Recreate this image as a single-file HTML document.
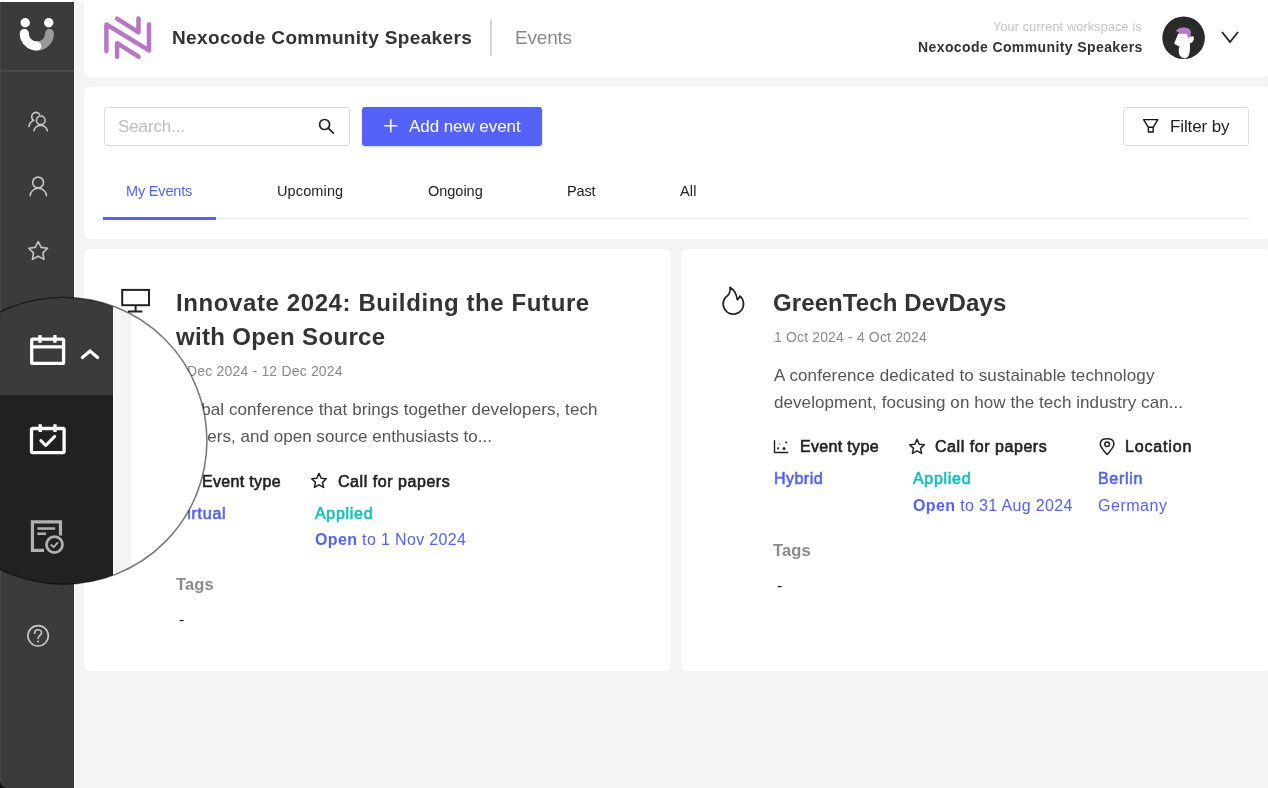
<!DOCTYPE html>
<html><head><meta charset="utf-8">
<style>
*{box-sizing:border-box;margin:0;padding:0}
html,body{width:1268px;height:788px;overflow:hidden;background:#f4f4f4;font-family:"Liberation Sans",sans-serif}
body{position:relative}
.a{position:absolute;white-space:nowrap;will-change:transform}
.card{position:absolute;background:#fff;border-radius:6px}
svg{position:absolute;overflow:visible}
b{font-weight:700}
</style></head><body>
<div class="a" style="left:0;top:0;width:74px;height:788px;background:#3b3b3b"></div>
<div class="a" style="left:0;top:0;width:1268px;height:2px;background:#fff;z-index:1"></div>
<div class="a" style="left:0;top:2px;width:1px;height:786px;background:#474747"></div>
<svg width="12" height="12" style="left:0;top:776px"><path d="M0,4.5 A7.5,7.5 0 0 0 7.5,12 L0,12 Z" fill="#111"/></svg>
<div class="a" style="left:73px;top:0;width:1px;height:788px;background:#363636"></div>
<div class="a" style="left:74px;top:0;width:1px;height:788px;background:#fff"></div>
<div class="a" style="left:0;top:70px;width:74px;height:2px;background:#4a4a4a"></div>

<div class="card" style="left:84px;top:-6px;width:1186px;height:83px"></div>
<div class="card" style="left:84px;top:87px;width:1186px;height:152px"></div>
<div class="card" style="left:84px;top:249px;width:587px;height:422px"></div>
<div class="card" style="left:681px;top:249px;width:589px;height:422px"></div>

<!-- search + buttons -->
<div class="a" style="left:104px;top:107px;width:246px;height:39px;border:1.5px solid #dcdcdc;border-radius:3px;background:#fff"></div>
<div class="a" style="left:362px;top:107px;width:179.5px;height:39px;border-radius:3px;background:#5462fa;box-shadow:0 1px 2px rgba(0,0,0,.18)"></div>
<div class="a" style="left:1123px;top:107px;width:126px;height:39px;border:1.5px solid #dcdcdc;border-radius:3px;background:#fff"></div>

<svg width="1268" height="788" style="left:0;top:0">
 <!-- sidebar logo -->
 <circle cx="25.2" cy="22.7" r="4.7" fill="#fff"/>
 <circle cx="48.7" cy="22.7" r="4.7" fill="#fff"/>
 <path d="M24.3,33.5 A12.6,12.6 0 0 0 49.5,33.5" fill="none" stroke="#9a9a9a" stroke-width="9" stroke-linecap="round"/>
 <path d="M24.3,33.5 A12.6,12.6 0 0 0 36.9,46.1" fill="none" stroke="#fff" stroke-width="9" stroke-linecap="round"/>
 <g fill="none" stroke="#c6c6c6" stroke-width="1.6" stroke-linecap="round" stroke-linejoin="round">
  <!-- users -->
  <circle cx="40.8" cy="120.3" r="4.3"/>
  <path d="M34,130.7 A6.8,6.6 0 0 1 47.3,130.7"/>
  <path d="M39.6,114.4 A4.3,4.3 0 1 0 33.8,120.4 A7,7 0 0 0 29,126.5"/>
  <!-- person -->
  <circle cx="38.1" cy="182.5" r="5.4"/>
  <path d="M30.2,195.7 A8.1,7.4 0 0 1 46.4,195.7"/>
  <!-- star -->
  <path id="star" d="M38.2,241.5 L41.1,247.4 L47.6,248.3 L42.9,252.9 L44,259.4 L38.2,256.3 L32.4,259.4 L33.5,252.9 L28.8,248.3 L35.3,247.4 Z"/>
  <!-- help -->
  <circle cx="38.1" cy="635.8" r="10.2"/>
  <path d="M34.6,633.4 C34.6,631.3 36.1,629.8 38.1,629.8 C40.1,629.8 41.5,631.2 41.5,633 C41.5,635.2 38.1,635.8 38.1,638.4"/>
 </g>
 <circle cx="38.1" cy="641.4" r="1" fill="#c8c8c8"/>

 <!-- header logo -->
 <g fill="none" stroke="#b678c1" stroke-width="4.5" stroke-linecap="round" stroke-linejoin="round">
  <path d="M106.4,51 L106.4,24.5 L149,50.4 L149,24.5"/>
  <path d="M117.1,18.6 L138.5,32.3 L138.5,18.6"/>
  <path d="M117.1,56.7 L117.1,43.2 L138.5,56.7"/>
 </g>
 <path d="M491,19.8 V55.7" stroke="#c8c8c8" stroke-width="1.5"/>
 <!-- avatar -->
 <circle cx="1183.6" cy="37.8" r="21.3" fill="#2a2a2a"/>
 <path d="M1179,47.5 C1178.3,52 1178.6,57.3 1184.4,58.4 C1189.9,57.6 1190.2,52 1189.9,43 Z" fill="#fff"/>
 <path d="M1178.3,33.6 L1174.2,43.3 C1175.5,45.2 1178.5,46.3 1181,47.2 L1186,47.5 L1189.8,43.2 C1192.2,43 1194.1,40.2 1193.9,37.9 C1193.7,36 1192.1,35.9 1190.5,36.8 L1189.5,33 Z" fill="#fff"/>
 <path d="M1176.1,30.9 C1177,28.5 1181,27.4 1184.4,27.5 C1188.6,27.7 1191.3,30 1190.9,33 C1190.7,36 1189.6,38 1188.5,38.7 C1187.6,36.5 1187.1,34.6 1186.6,33.7 C1183,33.7 1179,33.2 1176.1,30.9 Z" fill="#b87ac6"/>
 <path d="M1180.5,37.5 q1.5,-1 3,0 M1180.8,40 q1,0.6 2,0" stroke="#bbb" stroke-width="0.6" fill="none"/>
 <path d="M1222,32 L1230,42 L1238,32" fill="none" stroke="#222" stroke-width="1.8" stroke-linejoin="miter"/>

 <!-- search icon -->
 <circle cx="324.6" cy="124.5" r="5" fill="none" stroke="#222" stroke-width="1.7"/>
 <path d="M328.3,128.2 L333.4,133.2" stroke="#222" stroke-width="1.7" stroke-linecap="round"/>
 <path d="M384.2,125.7 H397.3 M390.75,119.2 V132.3" stroke="#fff" stroke-width="1.6"/>
 <path d="M1143.6,119.6 H1157.8 L1153.2,127.3 H1148.4 Z M1148.4,127.3 V132 H1153.2 V127.3" fill="none" stroke="#151515" stroke-width="1.4" stroke-linejoin="round"/>

 <!-- tabs line -->
 <rect x="103" y="218" width="1147" height="1.3" fill="#ececec"/>
 <rect x="103" y="217" width="113" height="3" fill="#5462fa"/>

 <!-- card1 icons -->
 <g fill="none" stroke="#222" stroke-width="2">
  <rect x="122.2" y="289.9" width="26.8" height="15.3"/>
  <path d="M135.6,306 V311.5 M128,311.5 H142.5"/>
 </g>
 <g fill="none" stroke="#222" stroke-width="1.5" stroke-linejoin="round" stroke-linecap="round">
  <path d="M177,473.5 V486 H190.5"/>
  <use href="#cstar" transform="translate(-598,34)"/>
 </g>
 <!-- card2 icons -->
 <g fill="none" stroke="#222" stroke-width="1.7" stroke-linejoin="round" stroke-linecap="round">
  <path d="M730,287.3 C731,292.3 728.5,295.3 725.4,297.5 A10.2,10.2 0 1 0 739.9,296.1 C739,298 738.3,299.6 737.3,299.6 C736.3,293.5 734.5,290 730,287.3 Z"/>
 </g>
 <g fill="none" stroke="#222" stroke-width="1.5" stroke-linejoin="round" stroke-linecap="round">
  <path d="M774.5,440.6 V452.5 H787.8" stroke-width="1.4"/>
  <path id="cstar" d="M917,439.4 L919.2,444.3 L924.3,444.8 L920.5,448.4 L921.6,453.4 L917,450.8 L912.4,453.4 L913.5,448.4 L909.7,444.8 L914.8,444.3 Z"/>
  <path d="M1107.1,454.5 C1103,450 1100.3,447 1100.3,443.9 C1100.3,440.2 1103.3,438.7 1107.1,438.7 C1110.9,438.7 1113.9,440.2 1113.9,443.9 C1113.9,447 1111.2,450 1107.1,454.5 Z"/>
  <circle cx="1107.1" cy="444.2" r="2.3"/>
 </g>
 <g fill="#222"><circle cx="778.1" cy="448.4" r="1.05"/><circle cx="779.9" cy="444.1" r="0.8" fill="#777"/><circle cx="784" cy="448.6" r="1.5"/><circle cx="786.2" cy="442.4" r="1"/></g>
</svg>

<div class="a" style="left:171.5px;top:28.2px;font-size:19px;line-height:19px;font-weight:700;color:#333;letter-spacing:0.36px">Nexocode Community Speakers</div>
<div class="a" style="left:515.3px;top:28.3px;font-size:19px;line-height:19px;font-weight:400;color:#8a8a8a;letter-spacing:-0.20px">Events</div>
<div class="a" style="right:125.9px;top:20.5px;font-size:12.5px;line-height:12.5px;font-weight:400;color:#c4c4c4;letter-spacing:0.22px">Your current workspace is</div>
<div class="a" style="right:125.7px;top:39.6px;font-size:14px;line-height:14px;font-weight:700;color:#333;letter-spacing:0.40px">Nexocode Community Speakers</div>
<div class="a" style="left:117.9px;top:117.6px;font-size:17px;line-height:17px;font-weight:400;color:#bdbdbd;letter-spacing:-0.12px">Search...</div>
<div class="a" style="left:409.4px;top:117.6px;font-size:17px;line-height:17px;font-weight:400;color:#fff;letter-spacing:-0.07px">Add new event</div>
<div class="a" style="left:1169.7px;top:117.5px;font-size:17px;line-height:17px;font-weight:400;color:#222;letter-spacing:-0.11px">Filter by</div>
<div class="a" style="left:125.7px;top:184.2px;font-size:14.5px;line-height:14.5px;font-weight:400;color:#5462f8;letter-spacing:-0.17px">My Events</div>
<div class="a" style="left:277.2px;top:184.2px;font-size:14.5px;line-height:14.5px;font-weight:400;color:#222;letter-spacing:0.13px">Upcoming</div>
<div class="a" style="left:427.8px;top:184.2px;font-size:14.5px;line-height:14.5px;font-weight:400;color:#222;letter-spacing:-0.02px">Ongoing</div>
<div class="a" style="left:567.0px;top:184.2px;font-size:14.5px;line-height:14.5px;font-weight:400;color:#222;letter-spacing:-0.14px">Past</div>
<div class="a" style="left:680.1px;top:184.2px;font-size:14.5px;line-height:14.5px;font-weight:400;color:#222;letter-spacing:0.14px">All</div>
<div class="a" style="left:175.5px;top:290.9px;font-size:24px;line-height:24px;font-weight:700;color:#333;letter-spacing:0.60px">Innovate 2024: Building the Future</div>
<div class="a" style="left:175.5px;top:324.7px;font-size:24px;line-height:24px;font-weight:700;color:#333;letter-spacing:0.34px">with Open Source</div>
<div class="a" style="left:175.0px;top:363.7px;font-size:14px;line-height:14px;font-weight:400;color:#8a8a8a;letter-spacing:0.18px">9 Dec 2024 - 12 Dec 2024</div>
<div class="a" style="left:162.7px;top:401.1px;font-size:17px;line-height:17px;font-weight:400;color:#555;letter-spacing:0.08px">A global conference that brings together developers, tech</div>
<div class="a" style="left:175.0px;top:428.1px;font-size:17px;line-height:17px;font-weight:400;color:#555;letter-spacing:0.03px">leaders, and open source enthusiasts to...</div>
<div class="a" style="left:202.0px;top:473.5px;font-size:16px;line-height:16px;font-weight:400;color:#222;letter-spacing:0.33px;-webkit-text-stroke:0.6px #222">Event type</div>
<div class="a" style="left:337.5px;top:473.5px;font-size:16px;line-height:16px;font-weight:400;color:#222;letter-spacing:0.55px;-webkit-text-stroke:0.6px #222">Call for papers</div>
<div class="a" style="left:176.0px;top:505.5px;font-size:16px;line-height:16px;font-weight:400;color:#5462f8;letter-spacing:0.76px;-webkit-text-stroke:0.6px #5462f8">Virtual</div>
<div class="a" style="left:314.8px;top:505.5px;font-size:16px;line-height:16px;font-weight:400;color:#16bdbb;letter-spacing:0.70px;-webkit-text-stroke:0.6px #16bdbb">Applied</div>
<div class="a" style="left:314.8px;top:531.9px;font-size:16px;line-height:16px;font-weight:400;color:#5462f8;letter-spacing:0.35px"><b>Open</b> to 1 Nov 2024</div>
<div class="a" style="left:175.5px;top:576.0px;font-size:16.5px;line-height:16.5px;font-weight:700;color:#8a8a8a;letter-spacing:0.17px">Tags</div>
<div class="a" style="left:179.0px;top:611.5px;font-size:16px;line-height:16px;font-weight:400;color:#222;letter-spacing:0.00px">-</div>
<div class="a" style="left:773.1px;top:290.5px;font-size:24px;line-height:24px;font-weight:700;color:#333;letter-spacing:0.10px">GreenTech DevDays</div>
<div class="a" style="left:773.9px;top:329.6px;font-size:14px;line-height:14px;font-weight:400;color:#8a8a8a;letter-spacing:0.15px">1 Oct 2024 - 4 Oct 2024</div>
<div class="a" style="left:774.0px;top:367.3px;font-size:17px;line-height:17px;font-weight:400;color:#555;letter-spacing:0.13px">A conference dedicated to sustainable technology</div>
<div class="a" style="left:774.0px;top:393.7px;font-size:17px;line-height:17px;font-weight:400;color:#555;letter-spacing:0.07px">development, focusing on how the tech industry can...</div>
<div class="a" style="left:799.7px;top:439.3px;font-size:16px;line-height:16px;font-weight:400;color:#222;letter-spacing:0.33px;-webkit-text-stroke:0.6px #222">Event type</div>
<div class="a" style="left:935.1px;top:439.3px;font-size:16px;line-height:16px;font-weight:400;color:#222;letter-spacing:0.55px;-webkit-text-stroke:0.6px #222">Call for papers</div>
<div class="a" style="left:1125.1px;top:439.3px;font-size:16px;line-height:16px;font-weight:400;color:#222;letter-spacing:0.83px;-webkit-text-stroke:0.6px #222">Location</div>
<div class="a" style="left:773.5px;top:471.1px;font-size:16px;line-height:16px;font-weight:400;color:#5462f8;letter-spacing:0.47px;-webkit-text-stroke:0.6px #5462f8">Hybrid</div>
<div class="a" style="left:912.6px;top:471.1px;font-size:16px;line-height:16px;font-weight:400;color:#16bdbb;letter-spacing:0.70px;-webkit-text-stroke:0.6px #16bdbb">Applied</div>
<div class="a" style="left:912.6px;top:497.6px;font-size:16px;line-height:16px;font-weight:400;color:#5462f8;letter-spacing:0.36px"><b>Open</b> to 31 Aug 2024</div>
<div class="a" style="left:1097.9px;top:470.7px;font-size:16px;line-height:16px;font-weight:400;color:#5462f8;letter-spacing:0.70px;-webkit-text-stroke:0.6px #5462f8">Berlin</div>
<div class="a" style="left:1097.9px;top:497.7px;font-size:16px;line-height:16px;font-weight:400;color:#5462f8;letter-spacing:0.52px">Germany</div>
<div class="a" style="left:772.8px;top:542.0px;font-size:16.5px;line-height:16.5px;font-weight:700;color:#8a8a8a;letter-spacing:0.17px">Tags</div>
<div class="a" style="left:776.8px;top:577.5px;font-size:16px;line-height:16px;font-weight:400;color:#222;letter-spacing:0.00px">-</div>

<!-- lens -->
<div style="position:absolute;left:-81px;top:297px;width:288px;height:288px;clip-path:circle(143.47px at 144.44px 143.73px)">
 <div style="position:absolute;left:0;top:0;width:288px;height:98px;background:linear-gradient(to right,#3b3b3b 0,#3b3b3b 193px,#363636 193px,#363636 194px,#fff 194px,#fff 195px,#f4f4f4 195px,#f4f4f4 212px,#fff 212px)"></div>
 <div style="position:absolute;left:0;top:98px;width:288px;height:190px;background:linear-gradient(to right,#212121 0,#212121 193px,#1a1a1a 193px,#1a1a1a 194px,#fff 194px,#fff 195px,#f4f4f4 195px,#f4f4f4 212px,#fff 212px)"></div>
 <svg width="1268" height="788" style="left:81px;top:-297px">
  <g fill="none" stroke="#fff" stroke-width="3.3" stroke-linecap="butt" stroke-linejoin="round">
   <g transform="translate(-0.7,-0.9)">
    <rect x="32.4" y="340" width="31.9" height="24.3" rx="1"/>
    <path d="M32.4,347.8 H64.3 M40.7,336 V343.6 M55.6,336 V343.6"/>
   </g>
   <path d="M82.4,357.5 L90,351.1 L97.6,357.5" stroke-linecap="round" stroke-linejoin="miter"/>
   <g transform="translate(-0.6,-0.8)">
    <rect x="32.1" y="429.3" width="32.6" height="24.1" rx="1"/>
    <path d="M40.8,425.1 V432.8 M55.6,425.1 V432.8"/>
    <path d="M41.5,441.4 L46.3,446.3 L55.3,437.2" stroke-width="3" stroke-linecap="round"/>
   </g>
  </g>
  <g fill="none" stroke="#b0b0b0" stroke-width="3.2" transform="translate(-1,-1.2)">
   <path d="M61.5,536.6 V523.1 H33.45 V551.5 H45"/>
   <path d="M38.4,529.7 H56.2 M38.4,534.9 H47" stroke-width="2.5"/>
   <circle cx="55.5" cy="545.8" r="8" stroke-width="2.8"/>
   <path d="M51.7,545.8 L54.6,548.4 L59,543.6" stroke-width="2"/>
  </g>
 </svg>
</div>
<svg width="1268" height="788" style="left:0;top:0"><circle cx="63.44" cy="440.73" r="143.47" fill="none" stroke="rgba(0,0,0,.52)" stroke-width="1.6"/></svg>
</body></html>
